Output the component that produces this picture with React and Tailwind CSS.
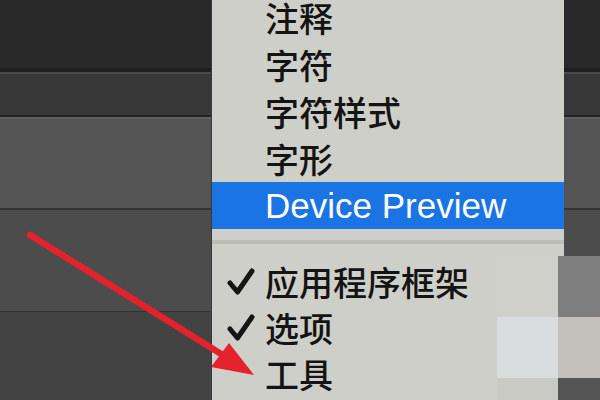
import React from 'react';

const topItems = ['注释', '字符', '字符样式', '字形'];
const checkItems = [
  { label: '应用程序框架', checked: true },
  { label: '选项', checked: true },
  { label: '工具', checked: false },
];

const Check = () => (
  <svg width="28" height="28" viewBox="0 0 28 28">
    <path d="M3 15 L10.5 24 L25 3" fill="none" stroke="#151515" strokeWidth="5" strokeLinecap="round" strokeLinejoin="round" />
  </svg>
);

const cjk = { fontFamily: '"Noto Sans CJK SC", "Noto Sans", sans-serif' };

export default function App() {
  return (
    <div className="relative w-[600px] h-[400px] overflow-hidden bg-[#434343]">
      {/* background panels */}
      <div className="flex flex-col">
        <div className="h-[68px] bg-[#292929]" />
        <div className="h-[4px] bg-[#1f1f1f]" />
        <div className="h-[2px] bg-[#4a4a4a]" />
        <div className="h-[41px] bg-[#383838]" />
        <div className="h-[2px] bg-[#222222]" />
        <div className="h-[2px] bg-[#606060]" />
        <div className="h-[89px] bg-[#545454]" />
        <div className="h-[2px] bg-[#363636]" />
        <div className="h-[101px] bg-[#4c4c4c]" />
        <div className="h-[1px] bg-[#333333]" />
        <div className="flex-1 h-[88px] bg-[#434343]" />
      </div>

      {/* menu */}
      <div
        className="absolute left-[211px] top-[-6px] w-[353px] h-[420px] bg-[#cfcfc9] border-l border-[#3a3a3a] text-[#141414]"
        style={cjk}
      >
        {topItems.map((t) => (
          <div key={t} className="h-[47px] flex items-center pl-[53px] text-[34px] font-medium leading-none">
            {t}
          </div>
        ))}
        <div
          className="h-[47px] flex items-center pl-[53px] bg-[#1b74e3] text-white text-[35px] leading-none"
          style={{ fontFamily: '"Liberation Sans", Arial, sans-serif' }}
        >
          Device Preview
        </div>
        <div className="h-[30px] pt-[11px]">
          <div className="h-[4px] bg-[#bcbcb7]" />
        </div>
        {checkItems.map((it) => (
          <div key={it.label} className="h-[46px] flex items-center">
            <div className="w-[53px] pl-[15px] flex items-center">{it.checked && <Check />}</div>
            <span className="text-[34px] font-medium leading-none">{it.label}</span>
          </div>
        ))}
      </div>

      {/* mosaic */}
      <div className="absolute left-[497px] top-[256px] grid grid-cols-[61px_42px] grid-rows-[61px_61px_22px]">
        <div className="bg-[#cfd0ca]" />
        <div className="bg-[#7e7e7e]" />
        <div className="bg-[#d9dcdd]" />
        <div className="bg-[#c3bfbb]" />
        <div className="bg-[#c9cac4]" />
        <div className="bg-[#545454]" />
      </div>

      {/* red arrow */}
      <svg className="absolute left-0 top-0" width="600" height="400" viewBox="0 0 600 400">
        <line x1="30" y1="235" x2="226" y2="357" stroke="#e3222b" strokeWidth="6.5" strokeLinecap="round" />
        <polygon points="229,343 254,375 211,367" fill="#e3222b" />
      </svg>
    </div>
  );
}
